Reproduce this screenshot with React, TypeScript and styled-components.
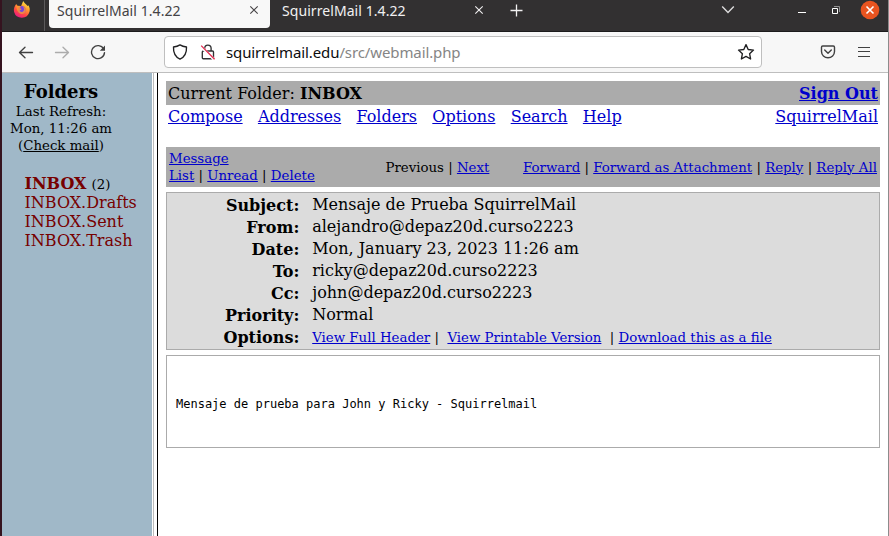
import React from "react";
import styled, { createGlobalStyle } from "styled-components";

const Global = createGlobalStyle`
  * { box-sizing: border-box; }
  html, body { margin: 0; padding: 0; background: #fff; overflow: hidden; }
`;

const serif = `"DejaVu Serif", serif`;
const uiFont = `"Noto Sans", "Open Sans", sans-serif`;

const Window = styled.div`
  width: 889px;
  height: 536px;
  display: flex;
  flex-direction: column;
  border-left: 2px solid #35131f;
  border-right: 1px solid #8c8c8c;
  overflow: hidden;
  background: #fff;
`;

const TabStrip = styled.div`
  height: 32px;
  flex: none;
  display: flex;
  align-items: flex-start;
  background: #323031;
  border-bottom: 1px solid #1c1b1c;
  font: 14px/20px ${uiFont};
`;

const PinnedTab = styled.div`
  width: 43px;
  height: 31px;
  flex: none;
  border-right: 1px solid #5c5a5b;
  svg { display: block; margin: 1px 0 0 11px; }
`;

const Tab = styled.div<{ $active?: boolean }>`
  display: flex;
  flex: none;
  justify-content: space-between;
  width: ${(p) => (p.$active ? 221 : 215)}px;
  height: 28px;
  margin-left: 4px;
  padding: 1px ${(p) => (p.$active ? 11 : 5)}px 0 8px;
  border-radius: 0 0 4px 4px;
  background: ${(p) => (p.$active ? "#f8f8f8" : "transparent")};
  color: ${(p) => (p.$active ? "#444244" : "#f1f0f1")};
  svg { margin-top: 4px; }
`;

const TabTitle = styled.span`
  white-space: nowrap;
  letter-spacing: 0.07px;
`;

const StripButton = styled.span<{ $left: number }>`
  display: block;
  height: 20px;
  margin-left: ${(p) => p.$left}px;
  flex: none;
  svg { display: block; }
`;

const NavBar = styled.div`
  height: 41px;
  flex: none;
  display: flex;
  align-items: center;
  background: #f7f7f7;
  border-bottom: 1px solid #bebebe;
`;

const NavIcon = styled.span<{ $left: number }>`
  flex: none;
  margin-left: ${(p) => p.$left}px;
  svg { display: block; }
`;

const AddressBar = styled.div`
  display: flex;
  align-items: center;
  flex: none;
  width: 598px;
  height: 32px;
  margin-left: 58px;
  padding: 0 6px 0 7px;
  border: 1px solid #bfbfbf;
  border-radius: 4px;
  background: #fff;
  font: 15px/22px ${uiFont};
  color: #858585;
`;

const Url = styled.span`
  flex: 1;
  margin-left: 10px;
  white-space: nowrap;
  letter-spacing: -0.11px;
  b { font-weight: 400; color: #0c0c0d; }
`;

const Frames = styled.div`
  flex: 1;
  display: flex;
  font: 16px/19px ${serif};
  color: #000;
`;

const Sidebar = styled.aside`
  width: 150px;
  flex: none;
  background: #a0b8c8;
  padding-top: 8px;
`;

const FrameDivider = styled.div`
  width: 6px;
  flex: none;
  border-right: 1px solid #000;
  background: linear-gradient(to right, #fff 1px, #bdbdbd 1px 2px, #fff 2px);
`;

const SideHeader = styled.div`
  width: 118px;
  text-align: center;
  font-size: 13.33px;
  line-height: 17px;
  white-space: nowrap;
  h2 { margin: 0; font-size: 18px; line-height: 22px; }
`;

const FolderList = styled.div`
  margin: 20px 0 0 22.5px;
  color: #770000;
  white-space: nowrap;
`;

const Folder = styled.div`
  height: 19px;
  small { font-size: 13.33px; color: #000; }
`;

const Main = styled.main`
  flex: 1;
  padding: 8px 8px 0;
`;

const Bar = styled.div`
  height: 24px;
  display: flex;
  justify-content: space-between;
  padding: 3px 2px 0;
  background: #ababab;
`;

const Menu = styled.nav`
  height: 42px;
  display: flex;
  gap: 15.3px;
  padding: 2px 2px 0;
`;

const Link = styled.a<{ $end?: boolean }>`
  color: #0000cc;
  text-decoration: underline;
  margin-left: ${(p) => (p.$end ? "auto" : "0")};
`;

const ActionBar = styled.div`
  height: 40px;
  display: flex;
  align-items: center;
  justify-content: space-between;
  padding: 0 3px;
  background: #ababab;
  font-size: 13.33px;
  line-height: 17px;
  white-space: nowrap;
`;

const Pager = styled.span`
  padding-left: 37px;
`;

const Details = styled.section`
  height: 158px;
  margin-top: 5px;
  padding-top: 1px;
  border: 1px solid #ababab;
  background: #dcdcdc;
`;

const DetailRow = styled.div`
  height: 22px;
  display: grid;
  grid-template-columns: 132.3px 1fr;
  column-gap: 12.9px;
  white-space: nowrap;
`;

const Label = styled.b`
  text-align: right;
  padding-top: 2px;
`;

const Value = styled.span<{ $small?: boolean }>`
  padding-top: ${(p) => (p.$small ? 3 : 1)}px;
  font-size: ${(p) => (p.$small ? 13.33 : 16)}px;
  line-height: ${(p) => (p.$small ? 17 : 19)}px;
  white-space: pre;
`;

const Message = styled.pre`
  height: 93px;
  margin: 5px 0 0;
  padding: 41px 9px 0;
  border: 1px solid #ababab;
  font: 12px/14px "DejaVu Sans Mono", monospace;
`;

const Firefox = () => (
  <svg width="18" height="18" viewBox="0 0 18 18">
    <defs>
      <linearGradient id="fire" x1=".8" y1="0" x2=".25" y2="1">
        <stop offset="0" stopColor="#fff44f" />
        <stop offset=".35" stopColor="#ffa12d" />
        <stop offset=".7" stopColor="#ff4545" />
        <stop offset="1" stopColor="#e8178a" />
      </linearGradient>
    </defs>
    <path d="M3.2 3.1 4.7 5 6 4.7 8 5.2 10.2 0c1.2 2.5 3.1 3.1 4.3 5l.8-.8c1.4 2 1.8 4.1 1.2 6.5a8 8 0 0 1-15.4.2C.4 7.9 1.4 5.5 3.2 3.1Z" fill="url(#fire)" />
    <circle cx="8.8" cy="8.8" r="3.8" fill="#7543df" />
    <path d="M3.2 4.6 5.8 5l2.5.4-1.5 1.7 1.8.9c-.5 1.2-1.8.9-1.9 1.7.3 1 1.6 1.5 3 1 1.2-.5 1.6-1.7 1.2-3.1-.3-1.1-.8-1.9-1.3-2.5 2 .6 3.3 2.3 3.1 4.3-.3 2.2-1.9 3.6-4.1 3.5-3-.1-5-3-5.4-8.3Z" fill="#ff9a2a" opacity=".8" />
  </svg>
);

const Cross = () => (
  <svg width="10" height="10" viewBox="0 0 10 10" fill="none" stroke="currentColor" strokeWidth="1.1">
    <path d="m1.3 1.3 7.4 7.4m0-7.4L1.3 8.7" />
  </svg>
);

const Arrow = ({ forward }: { forward?: boolean }) => (
  <svg width="16" height="16" viewBox="0 0 16 16" fill="none" stroke={forward ? "#acacac" : "#414141"} strokeWidth="1.35" strokeLinecap="round" strokeLinejoin="round">
    <path d={forward ? "M1.5 8.5h13M9 3.2 14.5 8.5 9 13.8" : "M14.5 8.5h-13M7 3.2 1.5 8.5 7 13.8"} />
  </svg>
);

const menuItems = ["Compose", "Addresses", "Folders", "Options", "Search", "Help"];

const details = [
  ["Subject:", "Mensaje de Prueba SquirrelMail"],
  ["From:", "alejandro@depaz20d.curso2223"],
  ["Date:", "Mon, January 23, 2023 11:26 am"],
  ["To:", "ricky@depaz20d.curso2223"],
  ["Cc:", "john@depaz20d.curso2223"],
  ["Priority:", "Normal"],
];

export default function App() {
  return (
    <Window>
      <Global />
      <TabStrip>
        <PinnedTab><Firefox /></PinnedTab>
        <Tab $active><TabTitle>SquirrelMail 1.4.22</TabTitle><Cross /></Tab>
        <Tab><TabTitle>SquirrelMail 1.4.22</TabTitle><Cross /></Tab>
        <StripButton $left={21}>
          <svg width="14" height="20" viewBox="0 0 14 20" stroke="#f1f0f1" strokeWidth="1.3"><path d="M.5 10.5h12M6.5 4.5v12" /></svg>
        </StripButton>
        <StripButton $left={197}>
          <svg width="14" height="20" viewBox="0 0 14 20" fill="none" stroke="#dddcdd" strokeWidth="1.4"><path d="m1.2 6.6 5.8 6 5.8-6" /></svg>
        </StripButton>
        <StripButton $left={62}>
          <svg width="10" height="20" viewBox="0 0 10 20"><path d="M1 12h8v1H1z" fill="#fff" /></svg>
        </StripButton>
        <StripButton $left={24}>
          <svg width="10" height="20" viewBox="0 0 10 20" fill="none"><path d="M3 6.5h5.5V12" stroke="#929192" /><path d="M1.5 8.5h5v5h-5z" stroke="#fff" /></svg>
        </StripButton>
        <StripButton $left={19}>
          <svg width="20" height="20" viewBox="0 0 20 20"><circle cx="10" cy="10" r="9.3" fill="#e95420" /><path d="m6.5 6.5 7 7m0-7-7 7" stroke="#fff" strokeWidth="1.6" /></svg>
        </StripButton>
      </TabStrip>
      <NavBar>
        <NavIcon $left={16}><Arrow /></NavIcon>
        <NavIcon $left={20}><Arrow forward /></NavIcon>
        <NavIcon $left={20}>
          <svg width="16" height="16" viewBox="0 0 16 16" fill="none" stroke="#414141" strokeWidth="1.35">
            <path d="M13.7 5A6.5 6.5 0 1 0 14.5 8.6" strokeLinecap="round" />
            <path d="M15 1.5v5.2H9.8Z" fill="#414141" stroke="none" />
          </svg>
        </NavIcon>
        <AddressBar>
          <svg width="16" height="16" viewBox="0 0 16 16" fill="none" stroke="#202022" strokeWidth="1.35" strokeLinejoin="round">
            <path d="M8 .9C6.2 2 3.8 2.7 1.5 3c-.3 5.8 1.7 9.9 6.5 12.1C12.8 12.9 14.8 8.8 14.5 3 12.2 2.7 9.8 2 8 .9Z" />
          </svg>
          <NavIcon $left={12}>
            <svg width="16" height="16" viewBox="0 0 16 16" fill="none">
              <path d="M4.7 7V4.3a3.2 3.2 0 0 1 6.4 0V7M3.3 7h9.2q1 0 1 1v5.7q0 1-1 1H3.3q-1 0-1-1V8q0-1 1-1Z" stroke="#303032" strokeWidth="1.35" />
              <path d="m.8 2.2 13 13" stroke="#fff" strokeWidth="3" />
              <path d="m1.2 1.6 13.4 13.6" stroke="#e2284d" strokeWidth="1.3" />
            </svg>
          </NavIcon>
          <Url><b>squirrelmail.edu</b>/src/webmail.php</Url>
          <svg width="18" height="18" viewBox="0 0 18 18" fill="none" stroke="#202022" strokeWidth="1.35" strokeLinejoin="round">
            <path d="m9 1.6 2.2 4.9 5.3.6-3.9 3.6 1 5.3L9 13.4 4.4 16l1-5.3-3.9-3.6 5.3-.6Z" />
          </svg>
        </AddressBar>
        <NavIcon $left={58}>
          <svg width="16" height="16" viewBox="0 0 16 16" fill="none" stroke="#414141" strokeWidth="1.4" strokeLinejoin="round">
            <path d="M2.7 2h10.6q1.2 0 1.2 1.2v4.3a6.5 6.2 0 0 1-13 0V3.2Q1.5 2 2.7 2Z" />
            <path d="M4.7 6 8 9.2 11.3 6" strokeLinecap="round" />
          </svg>
        </NavIcon>
        <NavIcon $left={20}>
          <svg width="16" height="16" viewBox="0 0 16 16" stroke="#414141" strokeWidth="1.2"><path d="M2 3.5h12M2 7.5h12M2 12.5h12" /></svg>
        </NavIcon>
      </NavBar>
      <Frames>
        <Sidebar>
          <SideHeader>
            <h2>Folders</h2>
            <div>Last Refresh:</div>
            <div>Mon, 11:26 am</div>
            <div>(<u>Check mail</u>)</div>
          </SideHeader>
          <FolderList>
            <Folder><b>INBOX</b> <small>(2)</small></Folder>
            <Folder>INBOX.Drafts</Folder>
            <Folder>INBOX.Sent</Folder>
            <Folder>INBOX.Trash</Folder>
          </FolderList>
        </Sidebar>
        <FrameDivider />
        <Main>
          <Bar><span>Current Folder: <b>INBOX</b></span><Link><b>Sign Out</b></Link></Bar>
          <Menu>
            {menuItems.map((item) => <Link key={item}>{item}</Link>)}
            <Link $end>SquirrelMail</Link>
          </Menu>
          <ActionBar>
            <span><Link>Message<br />List</Link> | <Link>Unread</Link> | <Link>Delete</Link></span>
            <Pager>Previous | <Link>Next</Link></Pager>
            <span><Link>Forward</Link> | <Link>Forward as Attachment</Link> | <Link>Reply</Link> | <Link>Reply All</Link></span>
          </ActionBar>
          <Details>
            {details.map(([label, value]) => (
              <DetailRow key={label}><Label>{label}</Label><Value>{value}</Value></DetailRow>
            ))}
            <DetailRow>
              <Label>Options:</Label>
              <Value $small>
                <Link>View Full Header</Link>{" |\u00a0 "}<Link>View Printable Version</Link>{"\u00a0 | "}<Link>Download this as a file</Link>
              </Value>
            </DetailRow>
          </Details>
          <Message>Mensaje de prueba para John y Ricky - Squirrelmail</Message>
        </Main>
      </Frames>
    </Window>
  );
}
